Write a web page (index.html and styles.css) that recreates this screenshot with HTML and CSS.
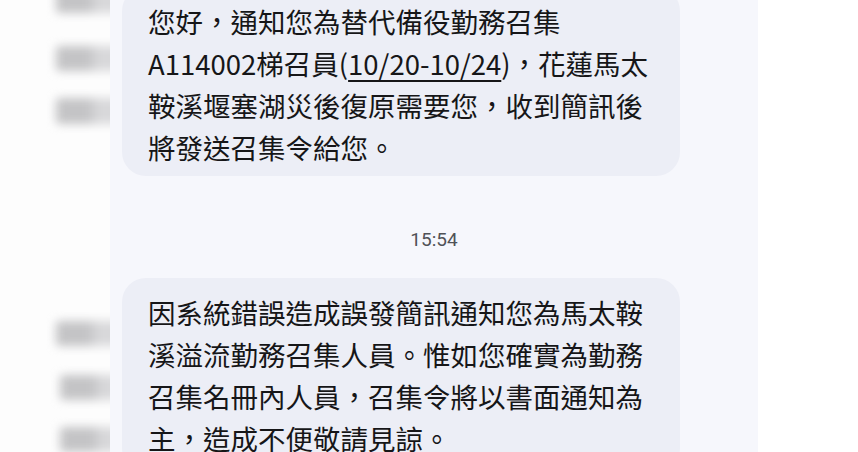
FILE: index.html
```html
<!DOCTYPE html>
<html lang="zh-Hant">
<head>
  <meta charset="UTF-8" />
  <title>簡訊</title>
  <meta name="viewport" content="width=device-width, initial-scale=1.0">
  <link rel="stylesheet" href="styles.css">
</head>
<body>
  <div class="page">
    <div class="side">
      <div class="blur b1"></div>
      <div class="blur b2"></div>
      <div class="blur b3"></div>
      <div class="blur b4"></div>
      <div class="blur b5"></div>
      <div class="blur b6"></div>
    </div>

    <div class="phone">
      <div class="bubble first">
        您好，通知您為替代備役勤務召集<br>
        A114002梯召員(<span class="link">10/20-10/24</span>)，花蓮馬太<br>
        鞍溪堰塞湖災後復原需要您，收到簡訊後<br>
        將發送召集令給您。
      </div>

      <div class="time">15:54</div>

      <div class="bubble">
        因系統錯誤造成誤發簡訊通知您為馬太鞍<br>
        溪溢流勤務召集人員。惟如您確實為勤務<br>
        召集名冊內人員，召集令將以書面通知為<br>
        主，造成不便敬請見諒。
      </div>
    </div>

    <div class="edge"></div>
  </div>
</body>
</html>
```

FILE: styles.css
```css
body {
  margin: 0;
  background: #ffffff;
  font-family: "Noto Sans CJK TC", "Noto Sans", sans-serif;
}
.page {
  display: flex;
  width: 858px;
  height: 452px;
  overflow: hidden;
}
.side {
  width: 110px;
  flex-shrink: 0;
  overflow: hidden;
  display: flex;
  flex-direction: column;
  align-items: flex-start;
  background: #fdfdfd;
}
.blur {
  height: 26px;
  width: 70px;
  margin-left: 56px;
  background: linear-gradient(90deg, #c4c4c6 0%, #c4c4c6 45%, #d8d8da 60%, #d8d8da 100%);
  filter: blur(5px);
  border-radius: 4px;
}
.b1 { margin-top: -12px; }
.b2 { margin-top: 33px; }
.b3 { margin-top: 27px; }
.b4 { margin-top: 197px; }
.b5 { margin-top: 29px; margin-left: 60px; }
.b6 { margin-top: 27px; margin-left: 60px; }

.phone {
  width: 648px;
  flex-shrink: 0;
  background: #f6f7fc;
  padding-left: 12px;
  box-sizing: border-box;
}
.bubble {
  width: 558px;
  box-sizing: border-box;
  background: #eceef6;
  border-radius: 24px;
  padding: 13px 0 13px 26px;
  font-size: 27.5px;
  line-height: 42px;
  color: #161618;
  white-space: nowrap;
}
.bubble.first {
  margin-top: -13px;
  padding-bottom: 8px;
}
.link {
  text-decoration: underline;
  text-decoration-thickness: 2px;
  text-underline-offset: 5px;
}
.time {
  text-align: center;
  font-family: Roboto, "Noto Sans", sans-serif;
  font-size: 19px;
  color: #505257;
  margin: 52px 0 0 -12px;
  line-height: 24px;
  height: 50px;
}
.edge {
  flex: 1;
  background: #ffffff;
}
```
